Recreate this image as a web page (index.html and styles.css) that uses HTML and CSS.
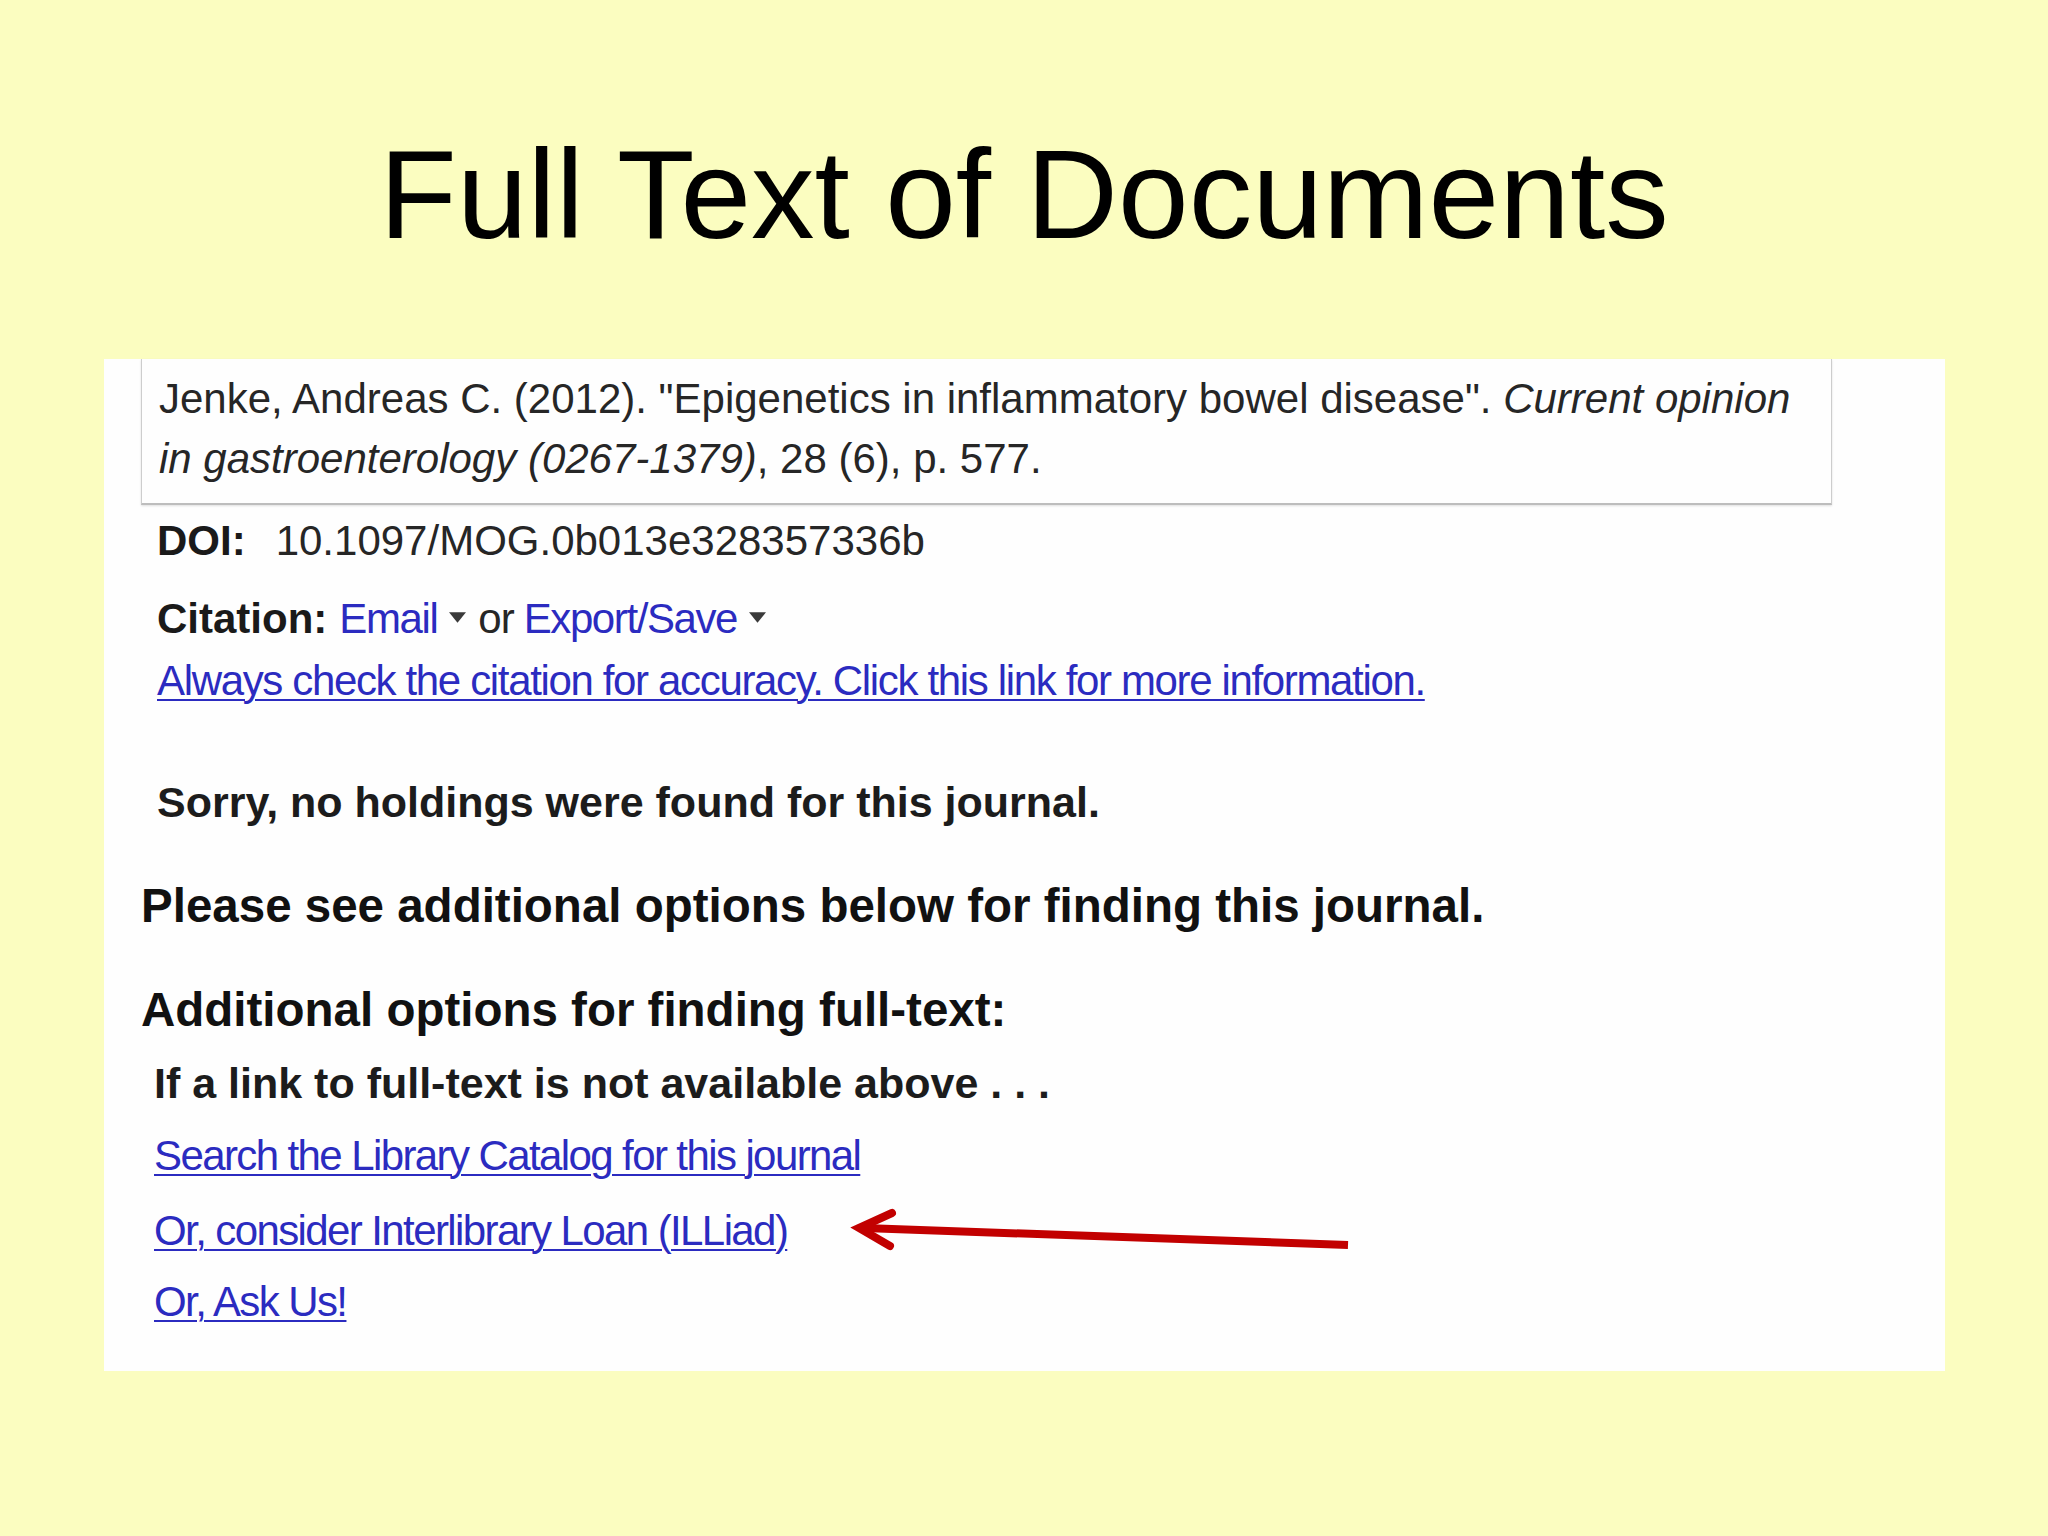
FILE: index.html
```html
<!DOCTYPE html>
<html>
<head>
<meta charset="utf-8">
<link rel="stylesheet" href="styles.css">
</head>
<body>
<header class="slide-head">
  <h1 class="title">Full Text of Documents</h1>
</header>
<main class="panel">
  <div class="cite-box">
    <p class="cite-text">Jenke, Andreas C. (2012). "Epigenetics in inflammatory bowel disease". <i>Current opinion</i></p>
    <p class="cite-text"><i>in gastroenterology (0267-1379)</i>, 28 (6), p. 577.</p>
  </div>
  <p class="row doi"><b class="label">DOI:</b><span class="doi-num">10.1097/MOG.0b013e328357336b</span></p>
  <p class="row citation"><b class="label">Citation:</b><a class="blue email">Email</a><svg class="caret" viewBox="0 0 16 10"><path d="M0 0 H16 L8 10 Z"/></svg><span class="or">or</span><a class="blue">Export/Save</a><svg class="caret" viewBox="0 0 16 10"><path d="M0 0 H16 L8 10 Z"/></svg></p>
  <p class="row always"><a class="ulink">Always check the citation for accuracy. Click this link for more information.</a></p>
  <p class="row sorry">Sorry, no holdings were found for this journal.</p>
  <p class="big please">Please see additional options below for finding this journal.</p>
  <p class="big additional">Additional options for finding full-text:</p>
  <p class="row ifalink">If a link to full-text is not available above . . .</p>
  <p class="row link l1"><a class="ulink">Search the Library Catalog for this journal</a></p>
  <p class="row link l2"><a class="ulink">Or, consider Interlibrary Loan (ILLiad)</a></p>
  <p class="row link l3"><a class="ulink">Or, Ask Us!</a></p>
  <svg class="arrow" viewBox="0 0 520 55" width="520" height="55">
    <path d="M24 23 L508 40" stroke="#c20000" stroke-width="8" fill="none"/>
    <path d="M52 8 L19 23 L50 41" stroke="#c20000" stroke-width="8" fill="none" stroke-linecap="round" stroke-linejoin="miter"/>
  </svg>
</main>
</body>
</html>
```
FILE: styles.css
```css
html, body {
  margin: 0;
  padding: 0;
}
body {
  width: 2048px;
  height: 1536px;
  background: #fbfdc0;
  font-family: "Liberation Sans", Arial, Helvetica, sans-serif;
  color: #1c1c1c;
  overflow: hidden;
}
.slide-head {
  height: 359px;
  box-sizing: border-box;
  padding-top: 131px;
}
.title {
  margin: 0;
  text-align: center;
  font-weight: normal;
  font-size: 127px;
  line-height: 127px;
  color: #000;
  letter-spacing: 0;
}
.panel {
  position: relative;
  margin-left: 104px;
  width: 1841px;
  height: 1012px;
  background: #fefefe;
  box-sizing: border-box;
  padding-left: 37px;
}
.cite-box {
  width: 1691px;
  box-sizing: border-box;
  border: 1px solid #cdcdcd;
  border-top: none;
  border-bottom: 2px solid #bdbdbd;
  box-shadow: 0 1px 2px rgba(0,0,0,0.12);
  padding: 10px 16px 14px 17px;
}
.cite-text {
  margin: 0;
  font-size: 42px;
  line-height: 60px;
  color: #262626;
  white-space: nowrap;
}
.row {
  margin: 0;
  font-size: 42px;
  line-height: 60px;
  padding-left: 16px;
  white-space: nowrap;
}
.doi { margin-top: 6px; color: #262626; }
.doi .doi-num { margin-left: 30px; }
.label { font-weight: bold; color: #1a1a1a; }
.citation { margin-top: 18px; }
.blue { color: #2b2bc0; text-decoration: none; letter-spacing: -1.4px; }
.email { margin-left: 12px; }
.caret {
  width: 17px;
  height: 11px;
  margin: 0 12px 0 12px;
  vertical-align: 10px;
  fill: #3a3a3a;
}
.or { margin-right: 10px; color: #262626; letter-spacing: -1px; }
.ulink {
  color: #2b2bc0;
  text-decoration: underline;
  text-decoration-thickness: 2px;
  text-underline-offset: 4px;
}
.always { margin-top: 2px; letter-spacing: -1.35px; }
.sorry {
  margin-top: 61px;
  font-weight: bold;
  font-size: 43px;
}
.big {
  margin: 44px 0 0 0;
  font-size: 47.5px;
  line-height: 60px;
  font-weight: bold;
  color: #111;
  white-space: nowrap;
}
.ifalink {
  margin-top: 13px;
  padding-left: 13px;
  font-weight: bold;
  font-size: 43px;
  letter-spacing: 0;
}
.link { padding-left: 13px; letter-spacing: -1.6px; }
.l1 { margin-top: 13px; }
.l2 { margin-top: 15px; }
.l3 { margin-top: 11px; }
.arrow {
  position: absolute;
  left: 736px;
  top: 846px;
}
```
